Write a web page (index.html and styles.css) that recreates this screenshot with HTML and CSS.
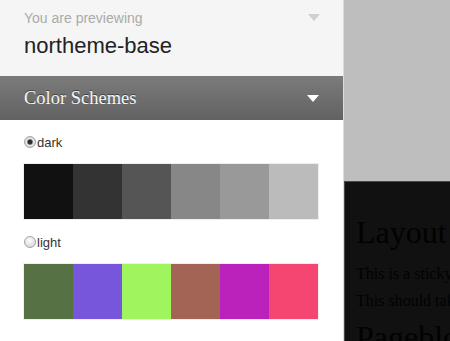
FILE: index.html
```html
<!DOCTYPE html>
<html lang="en">
<head>
    <meta charset="UTF-8">
    <meta name="viewport" content="width=device-width, initial-scale=1.0">
    <title>Theme preview</title>
    <link rel="stylesheet" href="styles.css">
</head>
<body>
    <div class="sidebar">
        <div class="previewing">
            <div>
                <div class="previewing-label">You are previewing</div>
                <div class="previewing-name">northeme-base</div>
            </div>
            <span class="arrow arrow-light"></span>
        </div>

        <div class="section-head">
            <span>Color Schemes</span>
            <span class="arrow arrow-white"></span>
        </div>

        <div class="schemes">
            <div class="scheme">
                <label class="scheme-label"><input type="radio" name="scheme" checked>dark</label>
                <div class="swatches">
                    <span style="background:#111111"></span>
                    <span style="background:#333333"></span>
                    <span style="background:#555555"></span>
                    <span style="background:#878787"></span>
                    <span style="background:#999999"></span>
                    <span style="background:#bbbbbb"></span>
                </div>
            </div>
            <div class="scheme">
                <label class="scheme-label"><input type="radio" name="scheme">light</label>
                <div class="swatches">
                    <span style="background:#567245"></span>
                    <span style="background:#7856dc"></span>
                    <span style="background:#a0f55f"></span>
                    <span style="background:#a46455"></span>
                    <span style="background:#bb22bb"></span>
                    <span style="background:#f44670"></span>
                </div>
            </div>
        </div>
    </div>

    <div class="preview">
        <div class="page">
            <h1>Layout</h1>
            <p>This is a sticky footer layout.</p>
            <p>This should take the full height.</p>
            <h1>Pageblock</h1>
        </div>
    </div>
</body>
</html>
```

FILE: styles.css
```css
html, body {
    height: 100%;
}
body {
    margin: 0;
    display: flex;
    overflow: hidden;
    font-family: "Liberation Sans", Arial, sans-serif;
    background-color: #bebebe;
}
.sidebar {
    width: 343px;
    flex-shrink: 0;
    background-color: #fff;
    border-right: 1px solid #dcdcdc;
}
.previewing {
    display: flex;
    justify-content: space-between;
    align-items: flex-start;
    height: 76px;
    box-sizing: border-box;
    padding: 10px 23px 0 24px;
    background-color: #f5f5f5;
}
.previewing-label {
    font-size: 14px;
    line-height: 16px;
    color: #aaa;
}
.previewing-name {
    margin-top: 7px;
    font-size: 22px;
    line-height: 25px;
    color: #222;
}
.arrow {
    width: 0;
    height: 0;
    border-left: 6px solid transparent;
    border-right: 6px solid transparent;
}
.arrow-light {
    margin-top: 4px;
    border-top: 7px solid #cfcfcf;
}
.arrow-white {
    border-top: 7px solid #fff;
}
.section-head {
    display: flex;
    justify-content: space-between;
    align-items: center;
    height: 44px;
    padding: 0 24px 0 24px;
    background: linear-gradient(#7b7b7b, #626262);
    font-family: "Liberation Serif", Georgia, serif;
    font-size: 18.5px;
    color: #f7f7f7;
    text-shadow: 0 -1px 0 rgba(0,0,0,0.45);
}
.schemes {
    padding: 14px 23px 0 23px;
}
.scheme {
    margin-bottom: 14px;
}
.scheme-label {
    display: flex;
    align-items: center;
    height: 16px;
    margin: 0 0 13px 1px;
    font-size: 13px;
    color: #333;
}
.scheme-label input {
    appearance: none;
    -webkit-appearance: none;
    width: 12px;
    height: 12px;
    margin: 0 1px 0 0;
    border-radius: 50%;
    border: 1px solid #a5a5a5;
    box-sizing: border-box;
    background: radial-gradient(circle at 45% 35%, #fdfdfd, #cfcfcf);
}
.scheme-label input:checked {
    background: radial-gradient(circle, #2e2e2e 0 2px, #888 2.6px, #e8e8e8 3.4px, #bdbdbd 100%);
}
.swatches {
    display: grid;
    grid-template-columns: repeat(6, 1fr);
    height: 57px;
    width: 296px;
    border: 1px solid #eee;
    box-sizing: border-box;
}
.preview {
    flex: 1;
    display: flex;
    flex-direction: column;
    padding-top: 181px;
}
.page {
    flex: 1;
    background-color: #111;
    border-top: 1px solid #4a4a4a;
    border-left: 1px solid #4a4a4a;
    padding: 32px 0 0 11px;
    font-family: "Liberation Serif", "Times New Roman", serif;
    color: #020202;
    white-space: nowrap;
    overflow: hidden;
}
.page h1 {
    margin: 0 0 14px;
    font-size: 32px;
    font-weight: normal;
    line-height: 37px;
}
.page p {
    margin: 0 0 9px;
    font-size: 16px;
    line-height: 18px;
}
```
